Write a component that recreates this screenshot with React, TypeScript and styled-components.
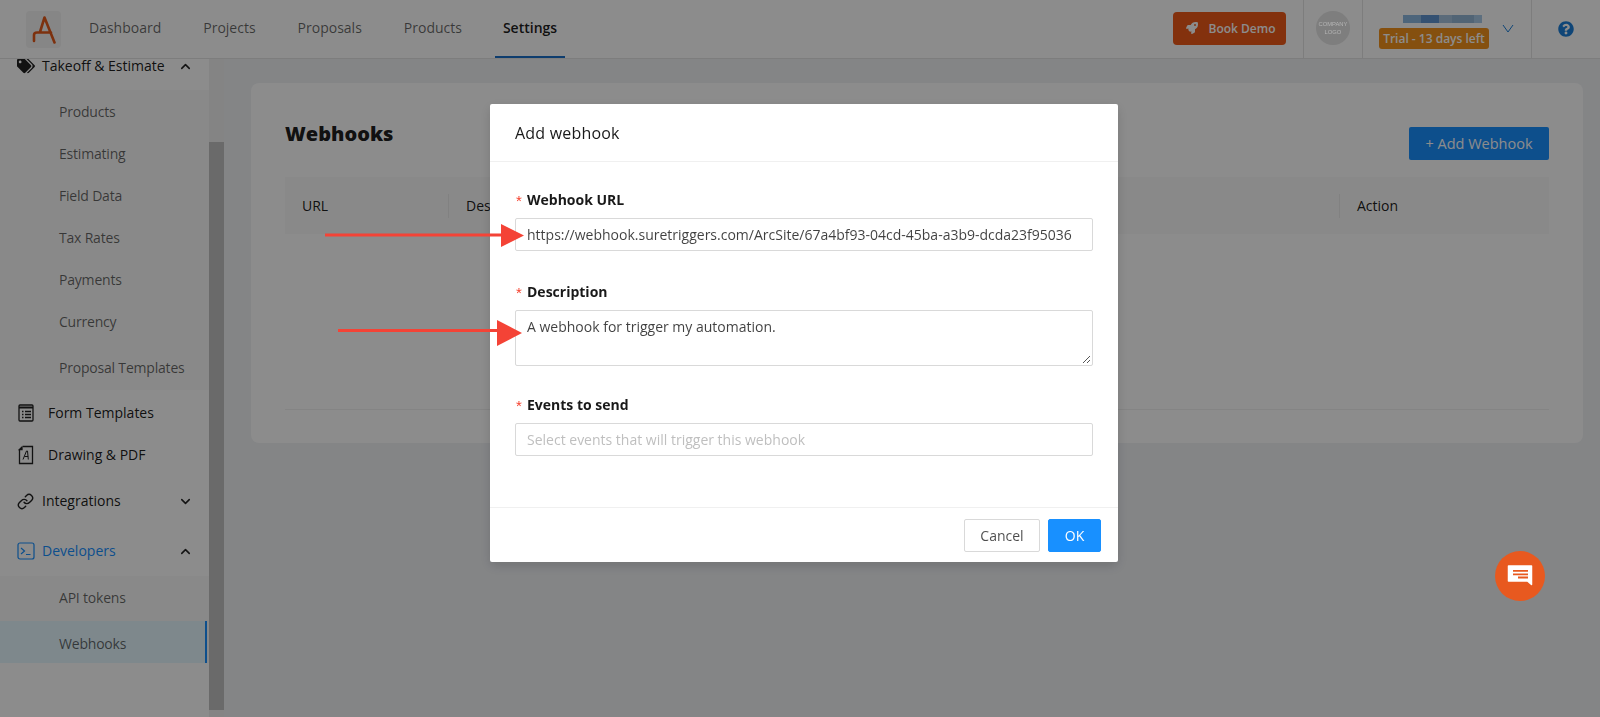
import React from "react";
import styled, { createGlobalStyle } from "styled-components";
import { FaTags, FaRocket, FaQuestionCircle } from "react-icons/fa";
import { FiLink, FiChevronDown, FiChevronUp } from "react-icons/fi";

const Global = createGlobalStyle`
  html, body { margin: 0; padding: 0; height: 717px; overflow: hidden; background: #f0f2f5; }
  body { font-family: "Open Sans", "Noto Sans", "Liberation Sans", sans-serif; font-size: 14px; color: rgba(0,0,0,.85); }
  * { box-sizing: border-box; }
`;

const Page = styled.div`
  width: 1600px; height: 717px; display: flex; flex-direction: column; overflow: hidden;
`;
const Header = styled.header`
  height: 59px; flex: none; background: #fff; border-bottom: 1px solid #e4e4e4;
  display: flex; align-items: stretch; padding-left: 26px;
`;
const LogoBox = styled.div`
  width: 35px; height: 37px; margin-top: 11px; border-radius: 4px; background: #f4f4f4;
  display: flex; align-items: center; justify-content: center;
`;
const Nav = styled.nav`
  display: flex; margin-left: 7px;
`;
const NavItem = styled.a<{ $active?: boolean }>`
  display: flex; align-items: center; justify-content: center; height: 58px; padding: 0 ${p => (p.$active ? 8 : 21)}px 1px;
  margin: 0 ${p => (p.$active ? 12 : 0)}px;
  font-weight: ${p => (p.$active ? 600 : 500)};
  color: ${p => (p.$active ? "rgba(0,0,0,.9)" : "rgba(0,0,0,.6)")};
  border-bottom: 2px solid ${p => (p.$active ? "#1a70c8" : "transparent")};
`;
const HeaderRight = styled.div`
  margin-left: auto; display: flex; align-items: stretch;
`;
const DemoWrap = styled.div`
  display: flex; align-items: center; padding-right: 17px; margin-top: -2px;
`;
const DemoButton = styled.button`
  width: 113px; height: 33px; border: 0; border-radius: 4px; background: #ee5918; color: #fff; padding-left: 9px;
  font: 600 12px "Open Sans", sans-serif; display: flex; align-items: center; justify-content: center; gap: 10px;
`;
const HeaderCell = styled.div<{ $w: number }>`
  width: ${p => p.$w}px; border-left: 1px solid #e4e4e4; display: flex; align-items: center; justify-content: center;
`;
const CompanyLogo = styled.div`
  position: relative; z-index: 1;
  width: 34px; height: 34px; border-radius: 50%; background: #7e7e7e; display: flex; align-items: center; justify-content: center; text-align: center;
  color: #b4b4b4; font: 500 5.8px/8px "Liberation Sans", sans-serif; margin-top: -2px;
`;
const Account = styled.div`
  width: 169px; display: flex; flex-direction: column; align-items: center; border-left: 1px solid #e4e4e4; position: relative; padding-right: 26px; padding-top: 15px;
`;
const Blur = styled.div`
  width: 79px; height: 8px; display: flex; margin-left: 16px;
`;
const BlurCell = styled.span<{ $c: string; $w: number }>`
  width: ${p => p.$w}px; background: ${p => p.$c};
`;
const TrialBadge = styled.div`
  margin-top: 5px; width: 110px; height: 21px; border-radius: 3px; background: #f2921d; color: #fff;
  font: 600 12px/21px "Open Sans", sans-serif; text-align: center; white-space: nowrap;
`;
const Caret = styled.span`
  position: absolute; right: 17px; top: 24px; color: #1c7fd9; display: flex;
`;

const Body = styled.div`
  flex: 1; display: flex; min-height: 0;
`;
const Sidebar = styled.aside`
  width: 209px; flex: none; background: #fff; overflow: hidden; display: flex; flex-direction: column;
`;
const MenuRow = styled.div<{ $h: number; $blue?: boolean; $gap?: number; $pl?: number; $pt?: number; $pb?: number }>`
  height: ${p => p.$h}px; flex: none; display: flex; align-items: center; padding: ${p => p.$pt ?? 0}px 16px ${p => p.$pb ?? 0}px ${p => p.$pl ?? 17}px;
  gap: ${p => p.$gap ?? 8}px; font-weight: 500; line-height: 14px;
  color: ${p => (p.$blue ? "#1890ff" : "rgba(0,0,0,.9)")};
`;
const Chev = styled.span`
  margin-left: auto; display: flex; color: rgba(0,0,0,.85);
`;
const SubMenu = styled.div`
  background: #fafafa; flex: none;
`;
const SubItem = styled.div<{ $h?: number; $active?: boolean; $pt?: number; $pb?: number }>`
  height: ${p => p.$h ?? 42}px; display: flex; align-items: center; padding: ${p => p.$pt ?? 0}px 0 ${p => p.$pb ?? 0}px 59px; letter-spacing: -0.2px;
  color: rgba(0,0,0,.6); background: ${p => (p.$active ? "#e6f7ff" : "transparent")};
  border-right: ${p => (p.$active ? "2px solid #1890ff" : "0")}; margin-right: 2px;
`;
const Track = styled.div`
  width: 15px; flex: none; background: #f1f1f1; padding-top: 83px; padding-bottom: 7px; display: flex;
`;
const Thumb = styled.div`
  flex: 1; background: #c1c1c1;
`;
const Main = styled.main`
  flex: 1; padding: 24px 17px 0 27px;
`;
const Card = styled.section`
  height: 360px; background: #fff; border-radius: 8px; padding: 44px 34px 0;
  display: flex; flex-direction: column;
`;
const CardHead = styled.div`
  display: flex; justify-content: space-between; height: 50px;
`;
const CardTitle = styled.h2`
  margin: -5px 0 0; font: 800 20px/24px "Open Sans", sans-serif; color: rgba(0,0,0,.9);
`;
const AddButton = styled.button`
  width: 140px; height: 33px; border: 0; border-radius: 2px; background: #1890ff; color: #fff; font: 400 14.5px "Open Sans", sans-serif;
`;
const TableHead = styled.div`
  height: 57px; background: #fafafa; display: grid; grid-template-columns: 163px 1fr 210px; align-items: center;
`;
const Th = styled.div<{ $divider?: boolean }>`
  padding-left: 17px; font-weight: 500; color: rgba(0,0,0,.9);
  border-left: ${p => (p.$divider ? "1px solid #ececec" : "0")}; line-height: 24px;
`;
const TableEnd = styled.div`
  margin-top: 175px; border-top: 1px solid #f0f0f0;
`;

const Mask = styled.div`
  position: fixed; inset: 0; background: rgba(0,0,0,.45);
`;
const Modal = styled.div`
  position: fixed; left: 490px; top: 104px; width: 628px; height: 458px; background: #fff; border-radius: 2px;
  box-shadow: 0 4px 12px rgba(0,0,0,.15); display: flex; flex-direction: column; z-index: 2;
`;
const ModalHead = styled.div`
  height: 58px; flex: none; border-bottom: 1px solid #f0f0f0; padding-left: 25px; display: flex; align-items: center;
  font: 500 16px "Open Sans", sans-serif; letter-spacing: .2px; color: rgba(0,0,0,.9);
`;
const ModalBody = styled.div`
  flex: 1; padding: 27px 25px 0;
`;
const Label = styled.div<{ $mt?: number }>`
  height: 22px; line-height: 22px; margin-top: ${p => p.$mt ?? 0}px;
  display: flex; align-items: center; margin-bottom: 7px;
`;
const Star = styled.span`
  width: 12px; color: #f5402d; font: 400 15px/22px "Liberation Sans", sans-serif; padding-top: 2px; padding-left: 1px;
`;
const LabelText = styled.span`
  font-weight: 700; font-size: 14px; color: rgba(0,0,0,.9);
`;
const Field = styled.div<{ $h: number; $muted?: boolean; $top?: boolean }>`
  position: relative; height: ${p => p.$h}px; border: 1px solid #d9d9d9; border-radius: 2px; padding: ${p => (p.$top ? "5px" : "0")} 11px 0;
  display: flex; align-items: ${p => (p.$top ? "flex-start" : "center")}; font-size: 14px; line-height: 22px;
  color: ${p => (p.$muted ? "#bfbfbf" : "rgba(0,0,0,.75)")}; white-space: nowrap;
`;
const Grip = styled.svg`
  position: absolute; right: 1px; bottom: 1px;
`;
const ModalFoot = styled.div`
  height: 55px; flex: none; border-top: 1px solid #f0f0f0; padding: 11px 17px 0 0; display: flex; justify-content: flex-end; gap: 8px;
`;
const FootButton = styled.button<{ $primary?: boolean; $w: number }>`
  width: ${p => p.$w}px; height: 33px; border-radius: 2px; font: 400 14px "Open Sans", sans-serif;
  background: ${p => (p.$primary ? "#1890ff" : "#fff")}; color: ${p => (p.$primary ? "#fff" : "rgba(0,0,0,.7)")};
  border: 1px solid ${p => (p.$primary ? "#1890ff" : "#d9d9d9")};
`;
const ArrowSvg = styled.svg`
  position: fixed; left: 0; top: 0; pointer-events: none; z-index: 3;
`;
const Fab = styled.div`
  position: fixed; left: 1495px; top: 551px; width: 50px; height: 50px; border-radius: 50%; background: #e8591f;
  display: flex; align-items: center; justify-content: center; z-index: 3;
`;

const FormIcon = () => (
  <svg width="16" height="18" viewBox="0 0 16 18" fill="none" stroke="#222" strokeWidth="1.3">
    <rect x="1" y="1" width="14" height="16" rx="1" />
    <path d="M1 3.5h14" strokeWidth="2" />
    <path d="M4 7.5h1.5M7 7.5h6M4 10.5h1.5M7 10.5h6M4 13.5h1.5M7 13.5h6" strokeWidth="1.5" />
  </svg>
);
const PdfIcon = () => (
  <svg width="16" height="20" viewBox="0 0 16 20" fill="none" stroke="#222" strokeWidth="1.3">
    <path d="M5 1.5h9.5v17h-13V4.5M1.5 4.5 4 2v2.5z" />
    <path d="M5 14.5 8.500 6h1l.8 8.5M6.5 11.5h3.600" strokeWidth="1" />
  </svg>
);
const TerminalIcon = () => (
  <svg width="18" height="18" viewBox="0 0 18 18" fill="none" stroke="#1890ff" strokeWidth="1.2">
    <rect x="1" y="1" width="16" height="16" rx="2" />
    <path d="M4 6l3.500 3L4 12M9 12.500h4.500" />
  </svg>
);

const subTop = ["Products", "Estimating", "Field Data", "Tax Rates", "Payments", "Currency"];
const navItems = ["Dashboard", "Projects", "Proposals", "Products", "Settings"];

export default function App() {
  return (
    <Page>
      <Global />
      <Header>
        <LogoBox>
          <svg width="26" height="28" viewBox="0 0 26 28" fill="none" stroke="#e35a1a" strokeWidth="2.6" strokeLinecap="round" strokeLinejoin="round">
            <path d="M3 25v-6q0-2.500 3-2.500h14M9 16 13.500 1.500l10 25" />
          </svg>
        </LogoBox>
        <Nav>
          {navItems.map((n, i) => (
            <NavItem key={n} $active={i === 4}>{n}</NavItem>
          ))}
        </Nav>
        <HeaderRight>
          <DemoWrap>
            <DemoButton><FaRocket size={12} />Book Demo</DemoButton>
          </DemoWrap>
          <HeaderCell $w={59}><CompanyLogo>COMPANY<br />LOGO</CompanyLogo></HeaderCell>
          <Account>
            <Blur>
              <BlurCell $w={18} $c="#8db9e0" /><BlurCell $w={18} $c="#5f94cf" /><BlurCell $w={13} $c="#a6c4de" /><BlurCell $w={22} $c="#94b6d6" /><BlurCell $w={8} $c="#a9cbe8" />
            </Blur>
            <TrialBadge>Trial - 13 days left</TrialBadge>
            <Caret>
              <svg width="12" height="9" viewBox="0 0 12 9" fill="none" stroke="currentColor" strokeWidth="1"><path d="M1 1l5 7 5-7" /></svg>
            </Caret>
          </Account>
          <HeaderCell $w={69}><FaQuestionCircle size={16} color="#1c7fd9" /></HeaderCell>
        </HeaderRight>
      </Header>
      <Body>
        <Sidebar>
          <MenuRow $h={31} $gap={7} $pb={17}>
            <FaTags size={18} color="#222" />Takeoff &amp; Estimate
            <Chev><FiChevronUp size={15} strokeWidth={2.5} /></Chev>
          </MenuRow>
          <SubMenu>
            {subTop.map(s => <SubItem key={s}>{s}</SubItem>)}
            <SubItem $h={48} $pt={2}>Proposal Templates</SubItem>
          </SubMenu>
          <MenuRow $h={44} $gap={14} $pl={18} $pt={2}><FormIcon />Form Templates</MenuRow>
          <MenuRow $h={42} $gap={14} $pl={18}><PdfIcon />Drawing &amp; PDF</MenuRow>
          <MenuRow $h={50} $gap={8}><FiLink size={17} color="#222" />Integrations<Chev><FiChevronDown size={15} strokeWidth={2.5} /></Chev></MenuRow>
          <MenuRow $h={50} $gap={7} $blue><TerminalIcon />Developers<Chev><FiChevronUp size={15} strokeWidth={2.5} /></Chev></MenuRow>
          <SubMenu>
            <SubItem $h={45} $pb={2}>API tokens</SubItem>
            <SubItem $active $pt={2}>Webhooks</SubItem>
          </SubMenu>
        </Sidebar>
        <Track><Thumb /></Track>
        <Main>
          <Card>
            <CardHead>
              <CardTitle>Webhooks</CardTitle>
              <AddButton>+ Add Webhook</AddButton>
            </CardHead>
            <TableHead>
              <Th>URL</Th>
              <Th $divider>Description</Th>
              <Th $divider>Action</Th>
            </TableHead>
            <TableEnd />
          </Card>
        </Main>
      </Body>
      <Mask />
      <Modal>
        <ModalHead>Add webhook</ModalHead>
        <ModalBody>
          <Label><Star>*</Star><LabelText>Webhook URL</LabelText></Label>
          <Field $h={33}>https://webhook.suretriggers.com/ArcSite/67a4bf93-04cd-45ba-a3b9-dcda23f95036</Field>
          <Label $mt={30}><Star>*</Star><LabelText>Description</LabelText></Label>
          <Field $h={56} $top>
            A webhook for trigger my automation.
            <Grip width="9" height="9" viewBox="0 0 9 9" fill="none" stroke="#555" strokeWidth="1"><path d="M1 8l7-7M5 8l3-3" /></Grip>
          </Field>
          <Label $mt={28}><Star>*</Star><LabelText>Events to send</LabelText></Label>
          <Field $h={33} $muted>Select events that will trigger this webhook</Field>
        </ModalBody>
        <ModalFoot>
          <FootButton $w={76}>Cancel</FootButton>
          <FootButton $w={53} $primary>OK</FootButton>
        </ModalFoot>
      </Modal>
      <ArrowSvg width="1600" height="717" viewBox="0 0 1600 717" fill="#f44336" stroke="none">
        <path d="M325 233.500h176v3H325z" />
        <path d="M501 224l23 11.500-23 11.500z" />
        <path d="M338 329h160v3H338z" />
        <path d="M497 320l25 13-25 13z" />
      </ArrowSvg>
      <Fab>
        <svg width="26" height="26" viewBox="0 0 26 26">
          <path d="M1.500 3h23v18.500l-4-3.500H1.500z" fill="#fff" stroke="#fff" strokeWidth="1.500" strokeLinejoin="round" />
          <path d="M6 7h15v1.800H6zM6 10.400h15v1.800H6zM11 13.600h10v1.800H11z" fill="#e8591f" />
        </svg>
      </Fab>
    </Page>
  );
}
